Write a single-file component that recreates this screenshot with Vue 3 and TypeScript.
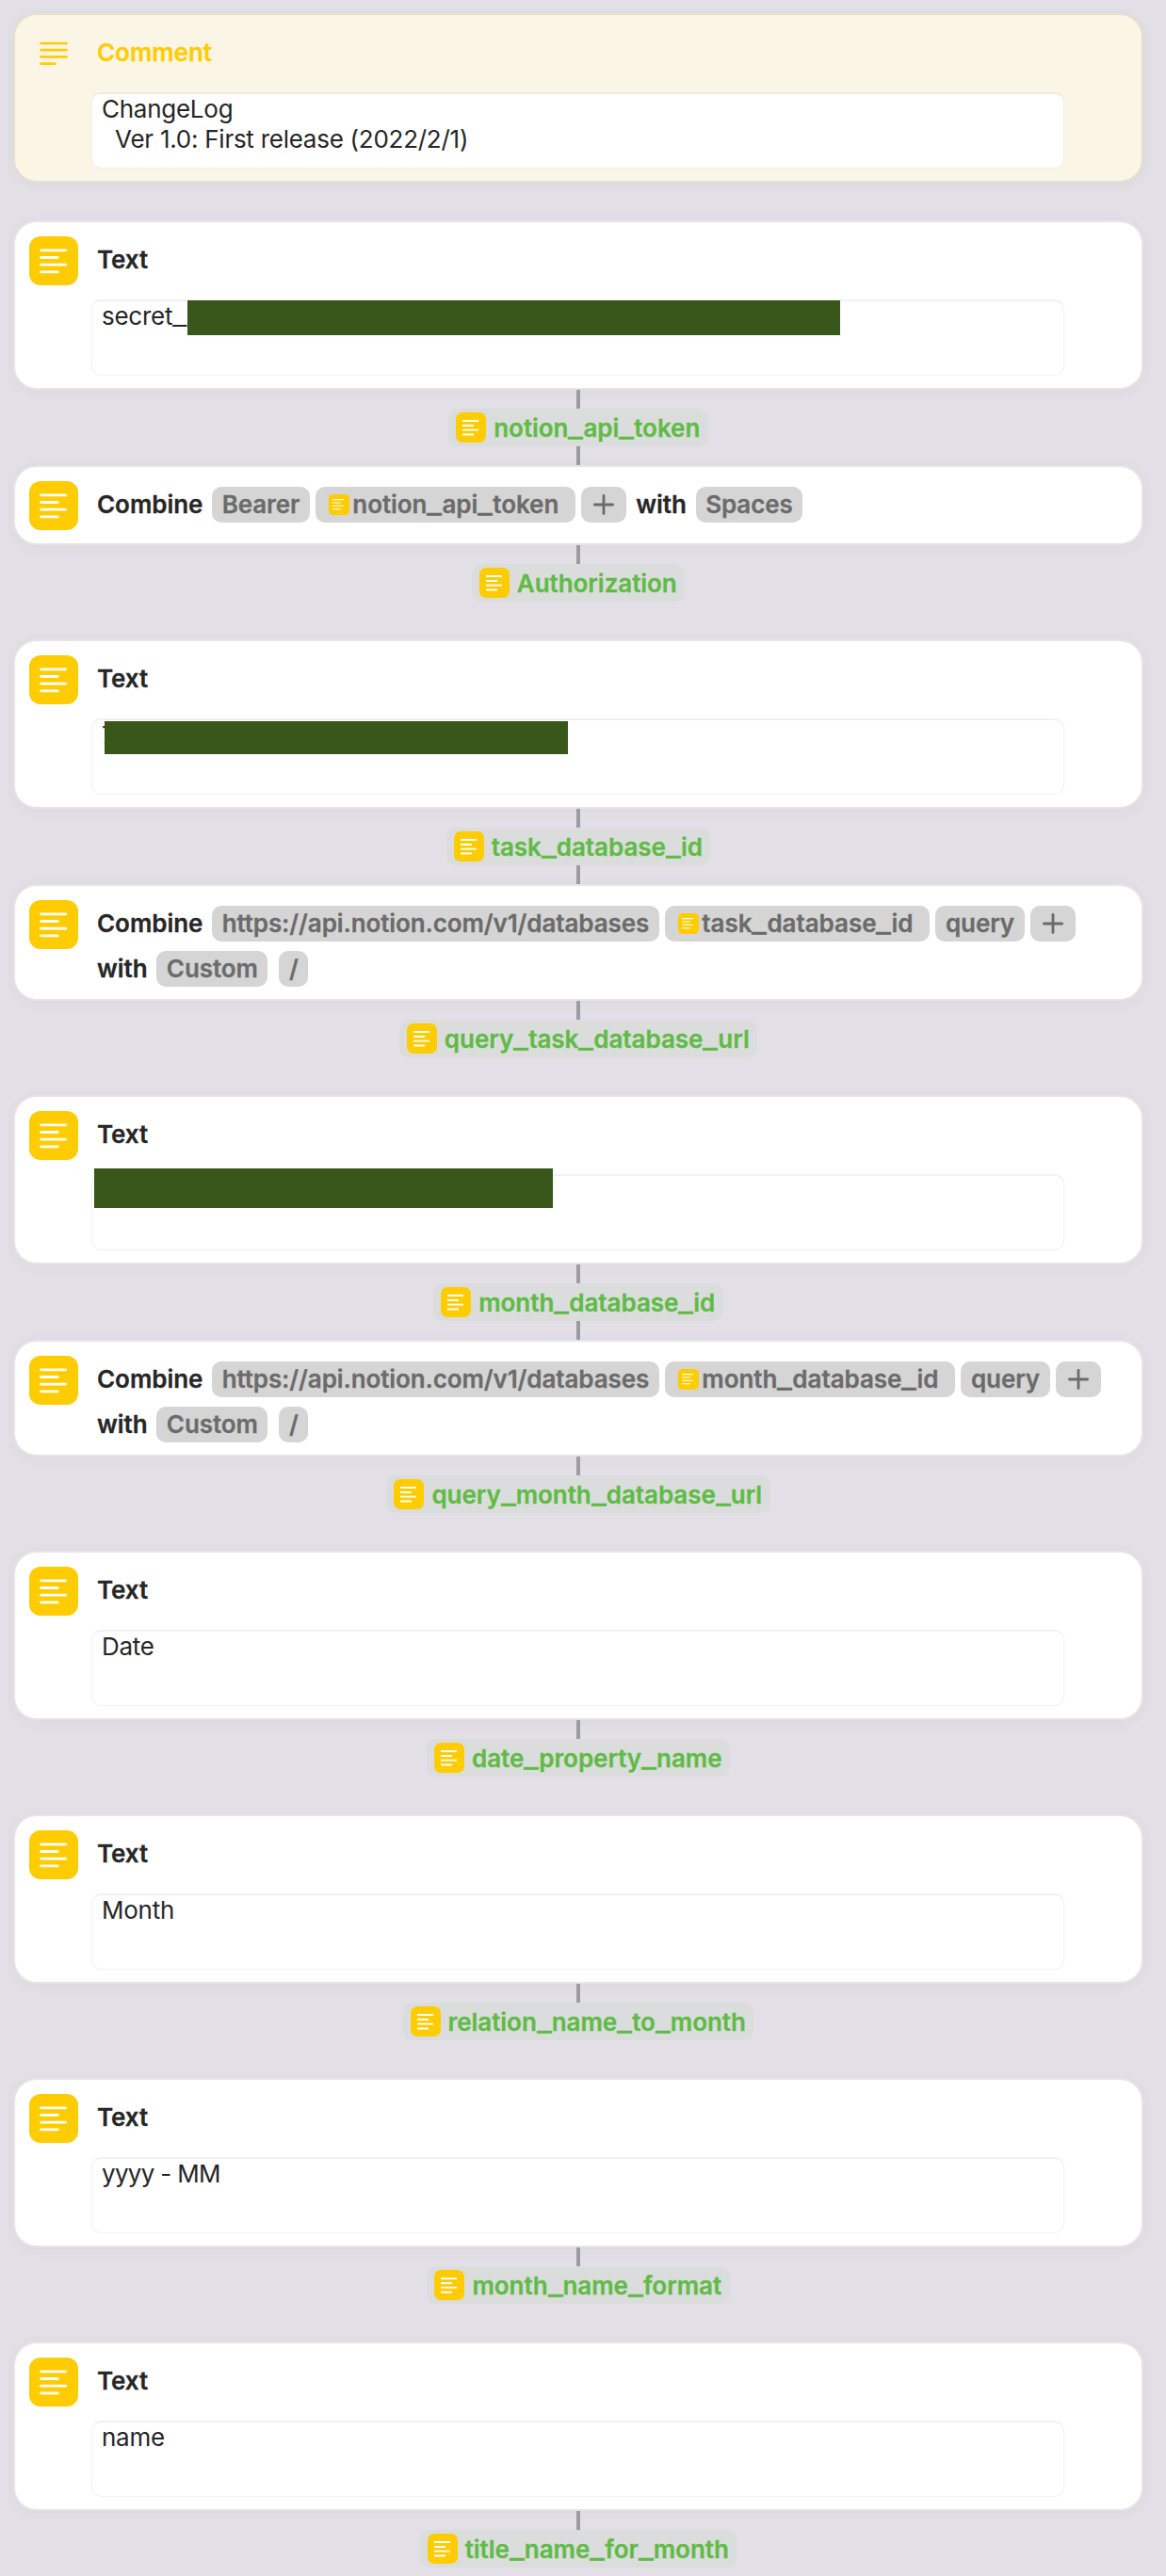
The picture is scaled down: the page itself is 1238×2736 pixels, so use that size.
<script setup lang="ts">
import { defineComponent, h } from 'vue'

type Part =
  | { kind: 'word'; text: string }
  | { kind: 'param'; text: string; spaced?: boolean }
  | { kind: 'variable'; text: string }
  | { kind: 'add' }

interface Redaction {
  left: number
  top: number
  width: number
  height: number
}

interface Action {
  type: 'comment' | 'text' | 'combine'
  title?: string
  lines?: string[]
  tight?: boolean
  redaction?: Redaction
  rows?: Part[][]
  output?: string
  linked?: boolean
}

const word = (text: string): Part => ({ kind: 'word', text })
const param = (text: string, spaced = false): Part => ({ kind: 'param', text, spaced })
const variable = (text: string): Part => ({ kind: 'variable', text })
const add: Part = { kind: 'add' }

const urlRows = (id: string): Part[][] => [
  [word('Combine'), param('https://api.notion.com/v1/databases'), variable(id), param('query'), add],
  [word('with'), param('Custom'), param('/', true)],
]

const actions: Action[] = [
  { type: 'comment', title: 'Comment', lines: ['ChangeLog', '  Ver 1.0: First release (2022/2/1)'] },
  {
    type: 'text',
    title: 'Text',
    lines: ['secret_'],
    redaction: { left: 102, top: 1, width: 693, height: 37 },
    output: 'notion_api_token',
    linked: true,
  },
  {
    type: 'combine',
    rows: [[word('Combine'), param('Bearer'), variable('notion_api_token'), add, word('with'), param('Spaces')]],
    output: 'Authorization',
  },
  {
    type: 'text',
    title: 'Text',
    lines: ['7'],
    redaction: { left: 14, top: 3, width: 492, height: 35 },
    output: 'task_database_id',
    linked: true,
  },
  { type: 'combine', rows: urlRows('task_database_id'), output: 'query_task_database_url' },
  {
    type: 'text',
    title: 'Text',
    lines: [],
    redaction: { left: 3, top: -6, width: 487, height: 42 },
    output: 'month_database_id',
    linked: true,
  },
  { type: 'combine', rows: urlRows('month_database_id'), output: 'query_month_database_url' },
  { type: 'text', title: 'Text', lines: ['Date'], output: 'date_property_name' },
  { type: 'text', title: 'Text', lines: ['Month'], output: 'relation_name_to_month' },
  { type: 'text', title: 'Text', lines: ['yyyy - MM'], tight: true, output: 'month_name_format' },
  { type: 'text', title: 'Text', lines: ['name'], output: 'title_name_for_month' },
]

const px = (r: Redaction) => ({
  left: `${r.left}px`,
  top: `${r.top}px`,
  width: `${r.width}px`,
  height: `${r.height}px`,
})

// Splits an identifier so that its underscores can be drawn wider than the font's own.
const Label = defineComponent({
  props: { text: { type: String, required: true } },
  setup(props) {
    return () =>
      h(
        'span',
        { class: 'label' },
        props.text.split(/(_)/).map((s) => (s === '_' ? h('span', { class: 'underscore' }, s) : s)),
      )
  },
})
</script>

<template>
  <main class="editor">
    <template v-for="(a, i) in actions" :key="i">
      <section class="card" :class="a.type">
        <svg v-if="a.type === 'comment'" class="icon" viewBox="0 0 52 52">
          <path d="M12.4 15H39.6M12.4 22.2H39.6M12.4 29.4H39.6M12.4 36.6H27.4" stroke="#ffcc02" stroke-width="2.7" stroke-linecap="round" />
        </svg>
        <svg v-else class="icon" viewBox="0 0 52 52">
          <rect width="52" height="52" rx="12" fill="#ffcc02" />
          <path d="M12.5 14.8H38.8M12.5 22.5H30.3M12.5 30.2H38.8M12.5 37.9H30.3" stroke="#fff" stroke-width="2.8" stroke-linecap="round" />
        </svg>

        <div v-if="a.rows" class="rows">
          <div v-for="(row, r) in a.rows" :key="r" class="row">
            <template v-for="(p, k) in row" :key="k">
              <span v-if="p.kind === 'word'" class="word">{{ p.text }}</span>
              <span v-else-if="p.kind === 'param'" class="param" :class="{ spaced: p.spaced }">{{ p.text }}</span>
              <span v-else-if="p.kind === 'variable'" class="param variable">
                <svg class="token" viewBox="0 0 22 22">
                  <rect width="22" height="22" rx="4.5" fill="#ffcc02" />
                  <path d="M4 5.6H16.2M4 9H12.8M4 12.3H16.2M4 15.7H12.8" stroke="#fff" stroke-width="1.1" />
                </svg>
                <Label :text="p.text" />
              </span>
              <span v-else class="param add">
                <svg viewBox="0 0 22 22">
                  <path d="M11 1.4V20.6M1.4 11H20.6" stroke="#6b6b6b" stroke-width="2.8" stroke-linecap="round" />
                </svg>
              </span>
            </template>
          </div>
        </div>

        <div v-else class="content">
          <h2 class="title">{{ a.title }}</h2>
          <div class="field">
            <div class="box">
              <div v-for="line in a.lines" :key="line" class="line" :class="{ tight: a.tight }"><Label :text="line" /></div>
            </div>
            <div v-if="a.redaction" class="redaction" :style="px(a.redaction)"></div>
          </div>
        </div>
      </section>

      <template v-if="a.output">
        <div class="connector"></div>
        <div class="output">
          <svg viewBox="0 0 32 32">
            <rect width="32" height="32" rx="7" fill="#ffcc02" />
            <path d="M7 9H24M7 14H19M7 18.7H24M7 23.5H19" stroke="#fff" stroke-width="1.8" />
          </svg>
          <Label :text="a.output" />
        </div>
        <div v-if="a.linked" class="connector"></div>
      </template>
      <div v-if="!a.linked" class="gap"></div>
    </template>
  </main>
</template>

<style>
body {
  background: #e2e0e6;
}
</style>

<style scoped>
.editor {
  box-sizing: border-box;
  width: 1238px;
  height: 2736px;
  padding: 14px 24px 0 14px;
  overflow: hidden;
  display: flex;
  flex-direction: column;
  align-items: center;
  background: #e2e0e6;
  color: #262626;
  font: 600 26px/32px Inter, sans-serif;
  letter-spacing: -0.05px;
  -webkit-text-stroke-width: 0.3px;
}

.card {
  box-sizing: border-box;
  flex: none;
  width: 1200px;
  display: flex;
  align-items: flex-start;
  padding: 15px 0 0 15px;
  border: 2px solid #e5e5e6;
  border-radius: 25px;
  background: #fff;
  box-shadow: 0 2px 14px rgba(60, 50, 90, 0.045);
}

.card.text,
.card.comment {
  height: 180px;
}

.card.combine {
  min-height: 85px;
}

.card.comment {
  background: #fbf5e6;
  border-color: #e5dfd0;
}

.icon {
  flex: none;
  width: 52px;
  height: 52px;
}

.content {
  flex: none;
  width: 1033px;
  margin-left: 14px;
}

.title {
  margin: 8px 0 0 6px;
  height: 59px;
  font-size: 26px;
  font-weight: 600;
  line-height: 33px;
}

.comment .title {
  color: #ffcc02;
}

.field {
  position: relative;
  height: 81px;
}

.box {
  box-sizing: border-box;
  height: 81px;
  padding: 0 10px;
  border: solid #f1f1f1;
  border-width: 2px 1px 1px 1px;
  border-radius: 10px;
  background: #fff;
}

.comment .box {
  border-color: #eeebe0 #f1efe6 #f1f0ed;
}

.line {
  height: 32px;
  font-weight: 400;
  letter-spacing: -0.26px;
  line-height: 32px;
  white-space: pre;
  -webkit-text-stroke-width: 0;
}

.line.tight {
  letter-spacing: -0.7px;
}

.redaction {
  position: absolute;
  background: #39571b;
}

.rows {
  display: flex;
  flex-direction: column;
  gap: 10px;
  padding: 6px 0 13px 20px;
}

.row {
  display: flex;
  align-items: center;
  gap: 6px;
  height: 38px;
}

.word {
  margin-right: 3.7px;
}

.param + .word {
  margin-left: 4px;
}

.param {
  box-sizing: border-box;
  display: flex;
  align-items: center;
  height: 38px;
  padding: 0 10.6px;
  border-radius: 10px;
  background: #d5d5d5;
  color: #6b6b6b;
  letter-spacing: -0.1px;
}

.param.spaced {
  margin-left: 6px;
}

.param.variable {
  padding: 0 18px 0 14px;
  letter-spacing: -0.05px;
}

.param.add {
  width: 48px;
  padding: 0 13px;
}

.param.add svg {
  width: 22px;
  height: 22px;
}

.token {
  width: 22px;
  height: 22px;
  margin-right: 3.5px;
}

.connector {
  flex: none;
  width: 4px;
  height: 20px;
  background: #9b9ca2;
}

.gap {
  flex: none;
  height: 40px;
}

.output {
  box-sizing: border-box;
  flex: none;
  display: flex;
  align-items: center;
  height: 40px;
  padding: 0 8.5px 0 8px;
  border-radius: 10px;
  background: #dbdddc;
  color: #5fbb46;
}

.output svg {
  width: 32px;
  height: 32px;
  margin-right: 8px;
}

.output :deep(.label) {
  padding-top: 1px;
}

.editor :deep(.underscore) {
  display: inline-block;
  width: 16px;
  transform: scaleX(1.3);
  transform-origin: 0 50%;
}
</style>
